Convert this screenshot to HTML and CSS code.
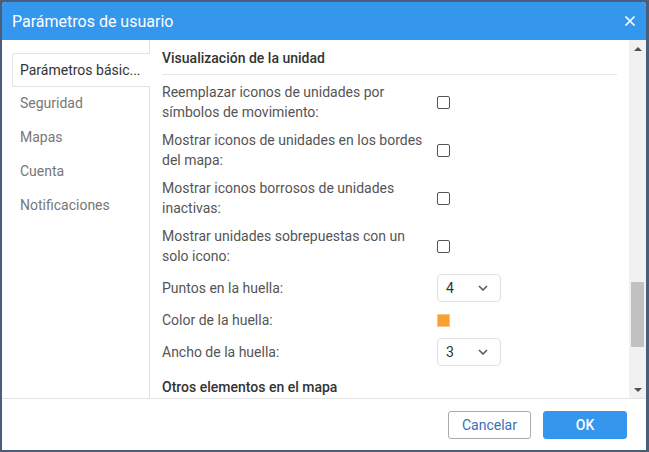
FILE: index.html
```html
<!DOCTYPE html>
<html>
<head>
	<title>Parámetros de usuario</title>
	<link rel="stylesheet" href="styles.css">
</head>
<body>
	<div class="dialog">
		<div class="header">
			<span class="title">Parámetros de usuario</span>
			<svg class="close" width="14" height="14" viewBox="0 0 14 14"><path d="M2.5 2.5 L11.5 11.5 M11.5 2.5 L2.5 11.5" stroke="#fff" stroke-width="1.7" fill="none"/></svg>
		</div>
		<div class="body">
			<div class="sidebar">
				<div class="tab active">Parámetros básic...</div>
				<div class="tab">Seguridad</div>
				<div class="tab">Mapas</div>
				<div class="tab">Cuenta</div>
				<div class="tab">Notificaciones</div>
			</div>
			<div class="content">
				<div class="scroll">
					<div class="section">Visualización de la unidad</div>
					<div class="row double">
						<div class="label">Reemplazar iconos de unidades por símbolos de movimiento:</div>
						<div class="control"><span class="check"></span></div>
					</div>
					<div class="row double">
						<div class="label">Mostrar iconos de unidades en los bordes del mapa:</div>
						<div class="control"><span class="check"></span></div>
					</div>
					<div class="row double">
						<div class="label">Mostrar iconos borrosos de unidades inactivas:</div>
						<div class="control"><span class="check"></span></div>
					</div>
					<div class="row double">
						<div class="label">Mostrar unidades sobrepuestas con un solo icono:</div>
						<div class="control"><span class="check"></span></div>
					</div>
					<div class="row first">
						<div class="label">Puntos en la huella:</div>
						<div class="control">
							<div class="select">4
								<svg width="10" height="6" viewBox="0 0 10 6"><path d="M1 1 L5 5 L9 1" stroke="#555" stroke-width="1.5" fill="none"/></svg>
							</div>
						</div>
					</div>
					<div class="row">
						<div class="label">Color de la huella:</div>
						<div class="control"><span class="swatch"></span></div>
					</div>
					<div class="row">
						<div class="label">Ancho de la huella:</div>
						<div class="control">
							<div class="select">3
								<svg width="10" height="6" viewBox="0 0 10 6"><path d="M1 1 L5 5 L9 1" stroke="#555" stroke-width="1.5" fill="none"/></svg>
							</div>
						</div>
					</div>
					<div class="section last">Otros elementos en el mapa</div>
				</div>
				<div class="scrollbar">
					<div class="arrow up"></div>
					<div class="track"><div class="thumb"></div></div>
					<div class="arrow down"></div>
				</div>
			</div>
		</div>
		<div class="footer">
			<button class="btn cancel">Cancelar</button>
			<button class="btn ok">OK</button>
		</div>
	</div>
</body>
</html>
```

FILE: styles.css
```css
* {
	box-sizing: border-box;
	font-family: Roboto, "Liberation Sans", sans-serif;
}
body {
	margin: 0;
	background-color: #4c5d7c;
	width: 649px;
	height: 452px;
	overflow: hidden;
}
.dialog {
	margin: 2px 3px 0 2px;
	width: 644px;
	height: 448px;
	background-color: white;
	border-radius: 4px 4px 0 0;
	display: flex;
	flex-direction: column;
	overflow: hidden;
}
.header {
	height: 38px;
	background-color: #3596ee;
	display: flex;
	align-items: center;
	justify-content: space-between;
	padding: 0 9px 0 10px;
	flex-shrink: 0;
}
.title {
	color: white;
	font-size: 16px;
}
.body {
	flex: 1;
	display: flex;
	border-bottom: 1px solid #e3e3e3;
	overflow: hidden;
}
.sidebar {
	width: 148px;
	border-right: 1px solid #e3e3e3;
	padding-top: 13px;
	flex-shrink: 0;
}
.tab {
	height: 34px;
	line-height: 33px;
	padding-left: 8px;
	margin-left: 10px;
	font-size: 14px;
	color: #777;
	white-space: nowrap;
}
.tab.active {
	color: #333;
	background-color: white;
	border: 1px solid #e3e3e3;
	border-right: none;
	border-radius: 3px 0 0 3px;
	margin-right: -1px;
	position: relative;
	padding-left: 7px;
}
.content {
	flex: 1;
	display: flex;
	overflow: hidden;
}
.scroll {
	flex: 1;
	padding: 8px 12px 0 12px;
	overflow: hidden;
}
.section {
	font-size: 14px;
	font-weight: 500;
	color: #333;
	height: 27px;
	border-bottom: 1px solid #e6e6e6;
	margin-bottom: 3px;
	line-height: 20px;
}
.section.last {
	border-bottom: none;
	margin-top: 9px;
}
.row {
	display: flex;
	align-items: center;
	min-height: 32px;
	font-size: 14px;
	color: #555;
}
.row.first {
	margin-top: 2px;
}
.row.double {
	min-height: 48px;
	line-height: 20px;
}
.label {
	width: 275px;
	padding-right: 12px;
}
.control {
	display: flex;
	align-items: center;
}
.check {
	display: inline-block;
	width: 13px;
	height: 13px;
	border: 1px solid #555;
	border-radius: 2px;
	margin-top: 1px;
}
.swatch {
	display: inline-block;
	width: 13px;
	height: 13px;
	background-color: #f9a12b;
	border: 1px solid #f0c890;
}
.select {
	width: 64px;
	height: 28px;
	border: 1px solid #e0e0e0;
	border-radius: 4px;
	display: flex;
	align-items: center;
	justify-content: space-between;
	padding: 0 12px 0 8px;
	color: #333;
	font-size: 14px;
}
.scrollbar {
	width: 17px;
	background-color: #f1f1f1;
	display: flex;
	flex-direction: column;
	flex-shrink: 0;
}
.arrow {
	height: 17px;
	display: flex;
	align-items: center;
	justify-content: center;
}
.arrow.up::after {
	content: "";
	border-left: 4px solid transparent;
	border-right: 4px solid transparent;
	border-bottom: 4px solid #505050;
}
.arrow.down::after {
	content: "";
	border-left: 4px solid transparent;
	border-right: 4px solid transparent;
	border-top: 4px solid #505050;
}
.track {
	flex: 1;
	padding: 225px 2px 0 2px;
}
.thumb {
	height: 65px;
	background-color: #c1c1c1;
}
.footer {
	height: 51px;
	display: flex;
	align-items: center;
	justify-content: flex-end;
	padding-right: 19px;
	gap: 12px;
	flex-shrink: 0;
}
.btn {
	height: 28px;
	border-radius: 3px;
	font-size: 14px;
	cursor: pointer;
}
.cancel {
	width: 83px;
	background-color: white;
	border: 1px solid #aaa;
	color: #3b6fb8;
}
.ok {
	width: 84px;
	background-color: #3596ee;
	border: 1px solid #3596ee;
	color: white;
	font-weight: 500;
}
```
